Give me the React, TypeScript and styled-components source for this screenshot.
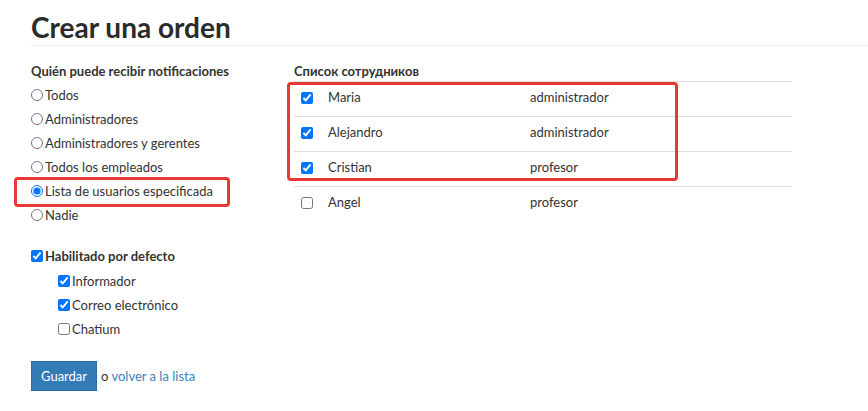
import styled, { createGlobalStyle } from "styled-components";

const GlobalStyle = createGlobalStyle`
  body {
    margin: 0;
    background: #fff;
    font-family: Lato, "Open Sans", sans-serif;
    font-size: 13px;
    color: #333;
  }
`;

const Page = styled.div`
  padding: 10px 0 20px 31px;
`;

const Title = styled.h1`
  margin: 0;
  font-size: 28px;
  line-height: 34px;
  font-weight: 700;
  color: #2b2b2b;
  padding-bottom: 1px;
  border-bottom: 1px solid #eee;
`;

const Columns = styled.div`
  display: flex;
  margin-top: 13px;
`;

const LeftColumn = styled.div`
  width: 263px;
  display: flex;
  flex-direction: column;
`;

const RightColumn = styled.div`
  width: 498px;
  padding-top: 2px;
`;

const SectionTitle = styled.div<{ $compact?: boolean }>`
  font-weight: 700;
  line-height: ${(p) => (p.$compact ? "20px" : "24px")};
`;

const OptionRow = styled.label<{ $highlight?: boolean }>`
  position: relative;
  display: flex;
  align-items: center;
  height: 24px;
  cursor: pointer;

  ${(p) =>
    p.$highlight &&
    `
    &::after {
      content: "";
      position: absolute;
      left: -17px;
      top: -2px;
      width: 210px;
      height: 24px;
      border: 3px solid #e53935;
      border-radius: 4px;
      pointer-events: none;
    }
  `}
`;

const SubOptions = styled.div`
  display: flex;
  flex-direction: column;
  padding-left: 27px;
  margin-top: 1px;
`;

const Radio = styled.input.attrs({ type: "radio" })`
  width: 12px;
  height: 12px;
  margin: 0 2px 0 0;
`;

const Check = styled.input.attrs({ type: "checkbox" })`
  width: 12px;
  height: 12px;
  margin: 0 2px 0 0;
`;

const Spacer = styled.div<{ $h: number }>`
  height: ${(p) => p.$h}px;
`;

const BoldText = styled.span`
  font-weight: 700;
`;

const Actions = styled.div`
  display: flex;
  align-items: center;
  gap: 4px;
  margin-top: 20px;
`;

const SaveButton = styled.button`
  height: 30px;
  padding: 0 9px;
  background: #337ab7;
  border: 1px solid #2e6da4;
  border-radius: 0;
  color: #fff;
  font-family: inherit;
  font-size: 13px;
  cursor: pointer;
`;

const BackLink = styled.a`
  color: #3d7fc0;
  text-decoration: none;
`;

const TableWrap = styled.div`
  position: relative;
`;

const Highlight = styled.div`
  position: absolute;
  left: -7px;
  top: 1px;
  width: 385px;
  height: 93px;
  border: 3px solid #e53935;
  border-radius: 4px;
  pointer-events: none;
`;

const Table = styled.table`
  width: 100%;
  border-collapse: collapse;
`;

const Row = styled.tr`
  height: 35px;
  border-top: 1px solid #ddd;
`;

const CheckCell = styled.td`
  width: 27px;
  padding: 0 0 0 7px;
  vertical-align: middle;
`;

const TextCell = styled.td<{ $w?: number }>`
  width: ${(p) => (p.$w ? `${p.$w}px` : "auto")};
  padding: 0 0 5px 0;
`;

const recipients = [
  "Todos",
  "Administradores",
  "Administradores y gerentes",
  "Todos los empleados",
  "Lista de usuarios especificada",
  "Nadie",
];

const channels = [
  { label: "Informador", checked: true },
  { label: "Correo electrónico", checked: true },
  { label: "Chatium", checked: false },
];

const employees = [
  { name: "Maria", role: "administrador", checked: true },
  { name: "Alejandro", role: "administrador", checked: true },
  { name: "Cristian", role: "profesor", checked: true },
  { name: "Angel", role: "profesor", checked: false },
];

export default function App() {
  return (
    <Page>
      <GlobalStyle />
      <Title>Crear una orden</Title>
      <Columns>
        <LeftColumn>
          <SectionTitle>Quién puede recibir notificaciones</SectionTitle>
          {recipients.map((r, i) => (
            <OptionRow key={r} $highlight={i === 4}>
              <Radio name="recipients" defaultChecked={i === 4} />
              {r}
            </OptionRow>
          ))}
          <Spacer $h={17} />
          <OptionRow>
            <Check defaultChecked />
            <BoldText>Habilitado por defecto</BoldText>
          </OptionRow>
          <SubOptions>
            {channels.map((c) => (
              <OptionRow key={c.label}>
                <Check defaultChecked={c.checked} />
                {c.label}
              </OptionRow>
            ))}
          </SubOptions>
          <Actions>
            <SaveButton>Guardar</SaveButton>
            <span>
              o <BackLink href="#">volver a la lista</BackLink>
            </span>
          </Actions>
        </LeftColumn>
        <RightColumn>
          <SectionTitle $compact>Список сотрудников</SectionTitle>
          <TableWrap>
            <Highlight />
            <Table>
              <tbody>
                {employees.map((e) => (
                  <Row key={e.name}>
                    <CheckCell>
                      <Check defaultChecked={e.checked} />
                    </CheckCell>
                    <TextCell $w={202}>{e.name}</TextCell>
                    <TextCell>{e.role}</TextCell>
                  </Row>
                ))}
              </tbody>
            </Table>
          </TableWrap>
        </RightColumn>
      </Columns>
    </Page>
  );
}
